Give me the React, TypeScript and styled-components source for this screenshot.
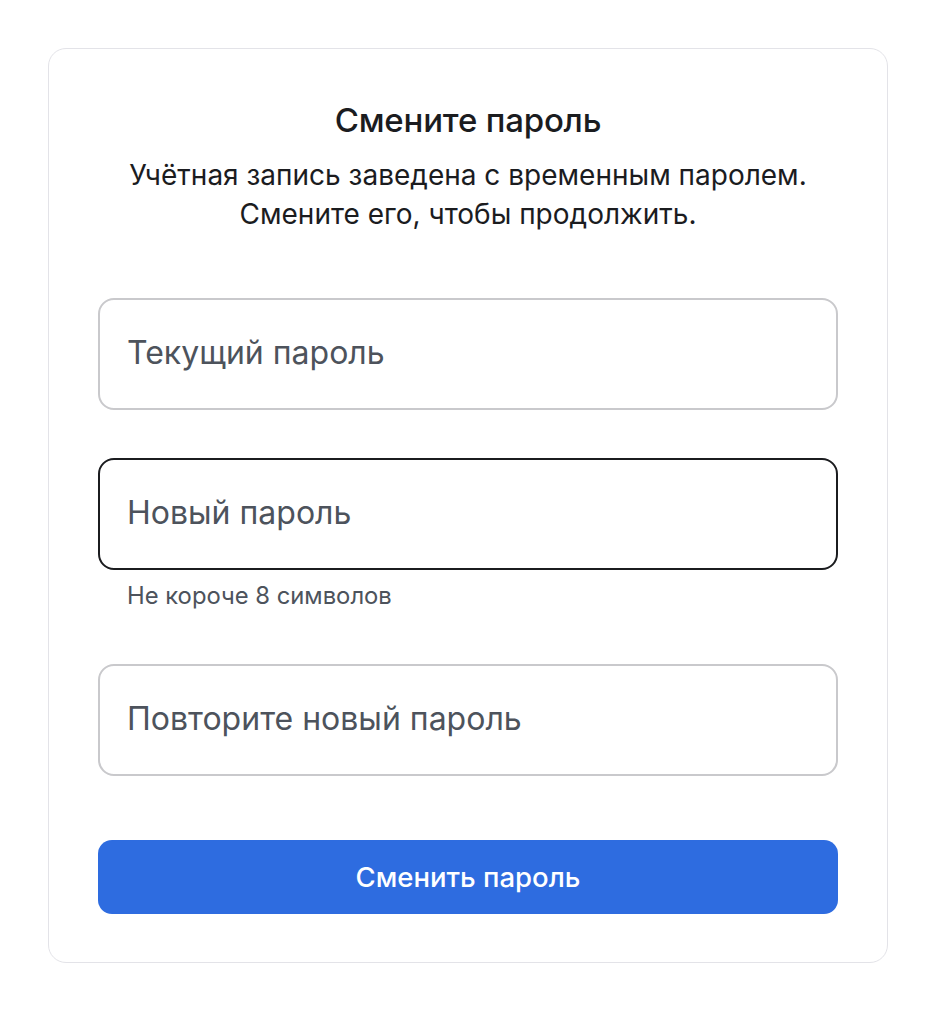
import React from "react";
import styled, { createGlobalStyle } from "styled-components";

const Global = createGlobalStyle`
  * { box-sizing: border-box; }
  body {
    margin: 0;
    background: #ffffff;
    font-family: Inter, "Noto Sans", sans-serif;
  }
`;

const Page = styled.div`
  padding: 48px;
`;

const Card = styled.div`
  width: 840px;
  border: 1.5px solid #e3e3e8;
  border-radius: 18px;
  padding: 51px 49px 48px;
  display: flex;
  flex-direction: column;
  align-items: stretch;
`;

const Title = styled.h1`
  margin: 0;
  font-size: 33px;
  line-height: 40px;
  font-weight: 500;
  color: #1b1c1f;
  text-align: center;
  letter-spacing: -0.2px;
`;

const Subtitle = styled.p`
  margin: 16px 0 0;
  font-size: 28px;
  line-height: 39px;
  color: #1b1c1f;
  text-align: center;
`;

const Form = styled.form`
  margin-top: 64px;
  display: flex;
  flex-direction: column;
`;

const Field = styled.div<{ $gap: number }>`
  display: flex;
  flex-direction: column;
  margin-bottom: ${(p) => p.$gap}px;
`;

const Input = styled.input<{ $focused?: boolean }>`
  width: 100%;
  height: 112px;
  border-radius: 16px;
  border: 2px solid ${(p) => (p.$focused ? "#1b1c1f" : "#c9c9cc")};
  padding: 0 27px 3px;
  font-family: Inter, "Noto Sans", sans-serif;
  font-size: 32px;
  color: #1b1c1f;
  background: #fff;
  outline: none;
  &::placeholder {
    color: #4d535c;
  }
`;

const Hint = styled.div`
  margin-top: 13px;
  padding-left: 29px;
  font-size: 23.8px;
  line-height: 26px;
  color: #4d535c;
`;

const Submit = styled.button`
  height: 74px;
  border: none;
  border-radius: 14px;
  background: #2e6ce0;
  color: #ffffff;
  font-family: Inter, "Noto Sans", sans-serif;
  font-size: 27.5px;
  font-weight: 500;
  cursor: pointer;
`;

export default function App() {
  return (
    <Page>
      <Global />
      <Card>
        <Title>Смените пароль</Title>
        <Subtitle>
          Учётная запись заведена с временным паролем.
          <br />
          Смените его, чтобы продолжить.
        </Subtitle>
        <Form onSubmit={(e) => e.preventDefault()}>
          <Field $gap={48}>
            <Input type="password" placeholder="Текущий пароль" />
          </Field>
          <Field $gap={55}>
            <Input type="password" placeholder="Новый пароль" $focused />
            <Hint>Не короче 8 символов</Hint>
          </Field>
          <Field $gap={64}>
            <Input type="password" placeholder="Повторите новый пароль" />
          </Field>
          <Submit type="submit">Сменить пароль</Submit>
        </Form>
      </Card>
    </Page>
  );
}
